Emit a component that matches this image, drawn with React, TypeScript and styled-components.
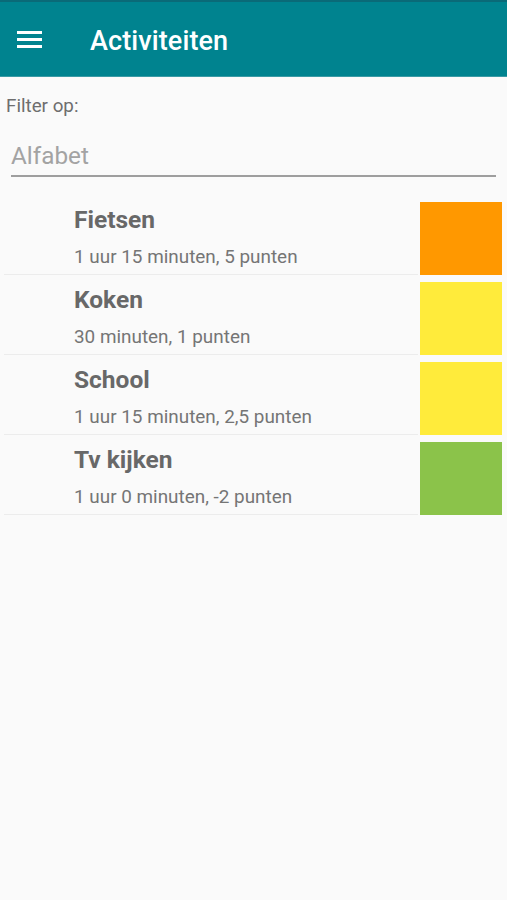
import React from "react";
import styled, { createGlobalStyle } from "styled-components";

const Global = createGlobalStyle`
  html, body { margin: 0; padding: 0; background: #fafafa; }
  body { font-family: Roboto, "Noto Sans", "Liberation Sans", sans-serif; }
  * { box-sizing: border-box; }
`;

const Page = styled.div`
  width: 507px;
  min-height: 900px;
  background: #fafafa;
`;

const AppBar = styled.header`
  height: 77px;
  background: #00838f;
  border-top: 2px solid #0a6a78;
  border-bottom: 1px solid #3a9aa5;
  display: flex;
  align-items: center;
  padding-left: 17px;
  gap: 48px;
`;

const MenuButton = styled.button`
  width: 25px;
  height: 17px;
  padding: 0;
  border: 0;
  background: transparent;
  display: flex;
  flex-direction: column;
  justify-content: space-between;
`;

const MenuLine = styled.span`
  display: block;
  height: 3px;
  width: 25px;
  background: #ffffff;
`;

const Title = styled.h1`
  margin: 3px 0 0 0;
  color: #ffffff;
  font-size: 27px;
  font-weight: 500;
  letter-spacing: 0.1px;
`;

const FilterSection = styled.section`
  padding: 19px 11px 0 6px;
`;

const FilterLabel = styled.div`
  font-size: 18.8px;
  line-height: 21px;
  color: #6e6e6e;
`;

const FilterInput = styled.input`
  display: block;
  width: 485px;
  margin: 25px 0 0 5px;
  padding: 0 0 5px 0;
  border: 0;
  border-bottom: 2px solid #9e9e9e;
  background: transparent;
  font-family: Roboto, "Noto Sans", sans-serif;
  font-size: 24.3px;
  line-height: 28px;
  color: #555;
  outline: none;
  &::placeholder { color: #a3a3a3; }
`;

const List = styled.ul`
  list-style: none;
  margin: 25px 0 0 0;
  padding: 0;
  display: flex;
  flex-direction: column;
  gap: 7px;
`;

const Row = styled.li`
  display: flex;
  height: 73px;
  padding-right: 5px;
  gap: 2px;
`;

const RowText = styled.div`
  flex: 1;
  margin-left: 4px;
  padding: 3px 0 0 70px;
  border-bottom: 1px solid #ececec;
`;

const RowTitle = styled.div`
  font-size: 24.5px;
  line-height: 30px;
  font-weight: 700;
  color: #686868;
`;

const RowSub = styled.div`
  margin-top: 11px;
  font-size: 18.9px;
  line-height: 21px;
  color: #757575;
`;

const Swatch = styled.div<{ $color: string }>`
  width: 82px;
  height: 73px;
  background: ${(p) => p.$color};
`;

const activities = [
  { name: "Fietsen", detail: "1 uur 15 minuten, 5 punten", color: "#ff9800" },
  { name: "Koken", detail: "30 minuten, 1 punten", color: "#ffeb3b" },
  { name: "School", detail: "1 uur 15 minuten, 2,5 punten", color: "#ffeb3b" },
  { name: "Tv kijken", detail: "1 uur 0 minuten, -2 punten", color: "#8bc34a" },
];

export default function App() {
  return (
    <Page>
      <Global />
      <AppBar>
        <MenuButton aria-label="menu">
          <MenuLine />
          <MenuLine />
          <MenuLine />
        </MenuButton>
        <Title>Activiteiten</Title>
      </AppBar>
      <FilterSection>
        <FilterLabel>Filter op:</FilterLabel>
        <FilterInput placeholder="Alfabet" />
      </FilterSection>
      <List>
        {activities.map((a) => (
          <Row key={a.name}>
            <RowText>
              <RowTitle>{a.name}</RowTitle>
              <RowSub>{a.detail}</RowSub>
            </RowText>
            <Swatch $color={a.color} />
          </Row>
        ))}
      </List>
    </Page>
  );
}
